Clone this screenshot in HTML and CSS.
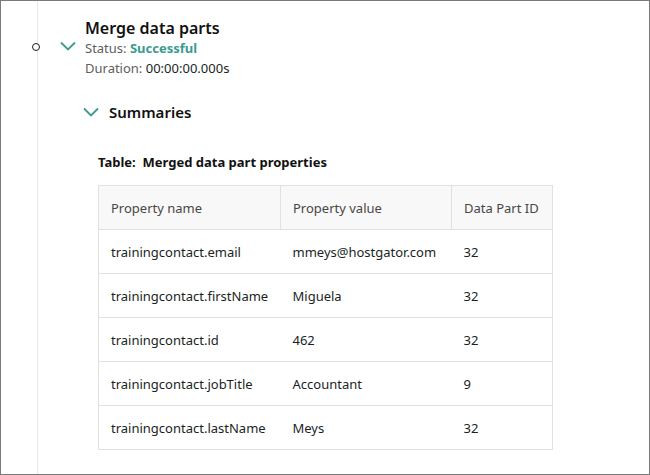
FILE: index.html
```html
<!DOCTYPE html>
<html>
<head>
<meta charset="UTF-8">
<title>Merge data parts</title>
<link rel="stylesheet" href="styles.css">
</head>
<body>
  <div class="frame">
    <div class="rail">
      <span class="dot"></span>
    </div>

    <div class="step">
      <div class="step-head">
        <svg class="chev" width="16" height="10" viewBox="0 0 16 10"><path d="M1 1.5 L8 8.5 L15 1.5" fill="none" stroke="#3a9b8f" stroke-width="1.8"/></svg>
        <div class="step-info">
          <h1>Merge data parts</h1>
          <div class="meta">Status: <b class="ok">Successful</b></div>
          <div class="meta">Duration: <span class="val">00:00:00.000s</span></div>
        </div>
      </div>

      <div class="summaries">
        <div class="sum-head">
          <svg class="chev" width="16" height="10" viewBox="0 0 16 10"><path d="M1 1.5 L8 8.5 L15 1.5" fill="none" stroke="#3a9b8f" stroke-width="1.8"/></svg>
          <h2>Summaries</h2>
        </div>

        <div class="caption">Table:&nbsp; Merged data part properties</div>
        <table class="props">
          <thead>
            <tr><th>Property name</th><th>Property value</th><th>Data Part ID</th></tr>
          </thead>
          <tbody>
            <tr><td>trainingcontact.email</td><td>mmeys@hostgator.com</td><td>32</td></tr>
            <tr><td>trainingcontact.firstName</td><td>Miguela</td><td>32</td></tr>
            <tr><td>trainingcontact.id</td><td>462</td><td>32</td></tr>
            <tr><td>trainingcontact.jobTitle</td><td>Accountant</td><td>9</td></tr>
            <tr><td>trainingcontact.lastName</td><td>Meys</td><td>32</td></tr>
          </tbody>
        </table>
      </div>
    </div>
  </div>
</body>
</html>
```

FILE: styles.css
```css
html, body {
  margin: 0;
  padding: 0;
}
body {
  font-family: "Noto Sans", "Open Sans", Arial, sans-serif;
  color: #201f1e;
  background: #fff;
}
.frame {
  display: flex;
  width: 650px;
  height: 475px;
  box-sizing: border-box;
  border: 1px solid #7a7a7a;
  overflow: hidden;
}
.rail {
  position: relative;
  width: 36px;
  border-right: 1px solid #e6e6e6;
  flex: none;
}
.dot {
  position: absolute;
  left: 31px;
  top: 42px;
  width: 6px;
  height: 6px;
  border: 1.5px solid #201f1e;
  border-radius: 50%;
  background: #fff;
}
.step {
  padding: 16px 0 0 22px;
}
.step-head {
  display: flex;
  align-items: flex-start;
}
.step-head .chev {
  margin-top: 24px;
  margin-right: 9px;
}
h1 {
  margin: 0 0 -1px;
  font-size: 16px;
  font-weight: 600;
  line-height: 22px;
  color: #111;
}
.meta {
  font-size: 13px;
  line-height: 20px;
  color: #605e5c;
}
.ok {
  color: #3a9b8f;
  font-weight: 700;
}
.val {
  color: #201f1e;
}
.summaries {
  padding: 24px 0 0 23px;
}
.sum-head {
  display: flex;
  align-items: center;
  gap: 10px;
}
h2 {
  margin: 0;
  font-size: 15px;
  font-weight: 600;
  color: #111;
}
.caption {
  margin: 31px 0 14px 15px;
  font-size: 13px;
  font-weight: 700;
  color: #111;
}
.props {
  margin-left: 15px;
  border-collapse: collapse;
  border: 1px solid #e1e1e1;
  font-size: 13px;
  width: 455px;
}
.props th, .props td {
  height: 43px;
  padding: 0 12px;
  text-align: left;
  border-bottom: 1px solid #e1e1e1;
  white-space: nowrap;
}
.props th {
  background: #f8f8f8;
  font-weight: 400;
  color: #484644;
  border-right: 1px solid #e1e1e1;
}
.props td {
  color: #201f1e;
}
.props th:nth-child(1) { width: 157px; }
.props th:nth-child(2) { width: 146px; }
```
